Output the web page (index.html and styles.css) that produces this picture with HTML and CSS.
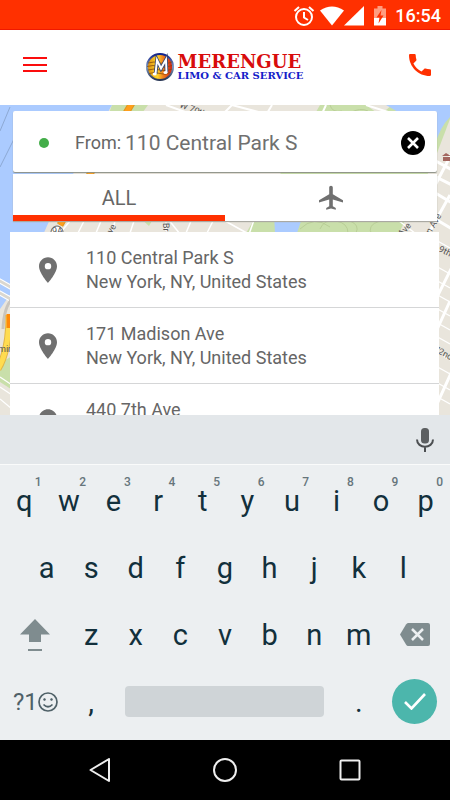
FILE: index.html
```html
<!DOCTYPE html>
<html lang="en">
<head>
<meta charset="utf-8">
<meta name="viewport" content="width=device-width, initial-scale=1">
<title>Merengue Limo &amp; Car Service</title>
<link rel="stylesheet" href="styles.css">
</head>
<body>
<div class="status">
  <svg width="22" height="22" viewBox="0 0 22 22" fill="none" stroke="#fff"><circle cx="11" cy="12" r="8" stroke-width="2"/><path d="M11 7v5.500l4 2.500" stroke-width="2"/><path d="M1.500 6l4.500-4M20.500 6L16 2" stroke-width="2"/></svg>
  <svg class="wifi" width="24" height="20" viewBox="0 0 24 20" fill="#fff"><path d="M0 4.500Q12-3.500 24 4.500L12 19.500z"/></svg>
  <svg width="20" height="20" viewBox="0 0 20 20" fill="#fff"><path d="M20 0v19.500H0z"/></svg>
  <svg class="battery" width="12" height="20" viewBox="0 0 12 20"><path d="M0 2.500h3.500V0h5v2.500H12V12H0z" fill="#ff9d80"/><path d="M0 12h12v7.500H0z" fill="#fff"/><path d="M7.500 4L2.500 11.500h3L4.500 17.500l5-8h-3z" fill="#ff3000"/></svg>
  <span>16:54</span>
</div>
<header class="header">
  <button class="icon-button" aria-label="Menu"><svg width="24" height="18" viewBox="0 0 24 18" fill="#fb0d0d"><path d="M0 1h24v2H0zM0 8h24v2H0zM0 14h24v2H0z"/></svg></button>
  <div class="brand">
    <svg width="30" height="30" viewBox="0 0 30 30">
      <defs>
        <linearGradient id="disc" x1="0" x2="1"><stop offset="0" stop-color="#d88a10"/><stop offset=".4" stop-color="#ffd52a"/><stop offset=".62" stop-color="#f0801c"/><stop offset="1" stop-color="#d01512"/></linearGradient>
        <linearGradient id="rim" x1="0" y1="0" x2="0" y2="1"><stop offset="0" stop-color="#10218c"/><stop offset=".5" stop-color="#7c96bd"/><stop offset="1" stop-color="#263453"/></linearGradient>
      </defs>
      <circle cx="15" cy="15" r="13" fill="url(#disc)" stroke="url(#rim)" stroke-width="2"/>
      <path d="M3 11q6-2 12 0t12-1M2 14.500q6-2 12 0t13-1M3 18q6-2 12 0t12-1M4 21.500q6-2 11 0t10-1" fill="none" stroke="#854b0c" stroke-width=".8"/>
      <path d="M10.500 22L12 8l4 8.500L21 7.500l.5 13" fill="none" stroke="#33436f" stroke-width="3.600"/>
      <path d="M10.500 22L12 8l4 8.500L21 7.500l.5 13" fill="none" stroke="#fff" stroke-width="2"/>
      <ellipse cx="9.700" cy="22" rx="2" ry="1.500" fill="#fff"/><ellipse cx="20.500" cy="20.500" rx="2" ry="1.500" fill="#fff"/>
    </svg>
    <div class="brand-text"><span class="brand-name">MERENGUE</span><span class="brand-sub">LIMO &amp; CAR SERVICE</span></div>
  </div>
  <button class="icon-button" aria-label="Call"><svg width="22" height="22" viewBox="3 3 18 18" fill="#ff3000"><path d="M6.620 10.790c1.440 2.830 3.760 5.140 6.590 6.590l2.200-2.200c.27-.27.67-.36 1.020-.24 1.120.37 2.330.57 3.570.57.55 0 1 .45 1 1V20c0 .55-.45 1-1 1-9.390 0-17-7.610-17-17 0-.55.45-1 1-1h3.500c.55 0 1 .45 1 1 0 1.250.2 2.450.57 3.570.11.35.03.74-.25 1.020z"/></svg></button>
</header>
<main class="map">
  <svg class="map-art" viewBox="0 0 450 310" preserveAspectRatio="xMidYMin slice" aria-hidden="true">
    <rect width="450" height="310" fill="#e9e5dc"/>
    <path d="M112 0h36l-16 22-50 60z" fill="#c9dfaa"/>
    <path d="M320 0h130v14L434 56 398 130H245z" fill="#c9dfaa"/>
    <path d="M366 0h26l-12 10z" fill="#e9e5dc"/>
    <path d="M0 0h112L60 92 42 132 14 184 0 204z" fill="#abcbff"/>
    <path d="M386 0h64v12q-10 10-15 28l-18-22z" fill="#abcbff"/>
    <path d="M274 110h29l-6 18h-22z" fill="#abcbff"/>
    <path d="M139 112h15l-5 9z" fill="#c9dfaa"/>
    <path d="M0 258l14-8v36l-14-9z" fill="#c9dfaa"/>
    <path d="M0 26L10 2M0 62L16 30" stroke="#8da9d4" fill="none"/>
    <g stroke="#b9ce96" fill="none"><path d="M320 124q4-10 16-8t12 12M300 124q14-14 30-2M350 116q10 4 6 12M380 116q-14 4-8 14M350 8q10-6 18-2M330 0q2 8 12 6"/></g>
    <g stroke="#fff" fill="none" stroke-width="2">
      <path d="M166 0l44 16M232 0l60 16M272 0l-12 20M326 0l-12 26M366 0l38 12M232 0l-12 12"/>
      <path d="M60 128l20-24M78 128l12-24M96 128l10-24M112 128l6-24M130 128l8-24M186 128l10-24M206 130l10-20M160 104l24 30M166 104v30M218 112l36 20M258 104l-10 28M394 112l26 20" stroke-width="1.500"/>
      <path d="M430 90l24-46M430 126l20-36M432 202l20-40M430 240l20-44M432 310l20-44M432 54l22 12M432 70l20 10M432 86l20 12M432 112l20 12" stroke-width="3"/>
      <path d="M434 134l16 9M434 160l16 9M434 174l16 9M434 188l16 9M434 202l16 9M434 216l16 9M434 230l16 9M434 246l16 9M434 260l16 9M434 276l16 9M434 290l16 9M0 272l12 8M0 282l12 8M0 294l12 10" stroke-width="1.200"/>
    </g>
    <path d="M-2 175l16 9M-2 187l16 9" stroke="#fff" stroke-width="5"/><path d="M-2 175l16 9M-2 187l16 9" stroke="#dad7d0" stroke-width="3"/>
    <path d="M12 194Q4 202 3 224" fill="none" stroke="#c9c5bd" stroke-width="3"/>
    <path d="M132-2L60 120" stroke="#dd961f" stroke-width="7"/><path d="M132-2L60 120" stroke="#ff9f1c" stroke-width="5"/>
    <path d="M9 210q0 36-11 54" stroke="#e1b649" stroke-width="7" fill="none"/><path d="M9 210q0 36-11 54" stroke="#ffdc50" stroke-width="5" fill="none"/>
    <path d="M9 209v14" stroke="#ff8a0a" stroke-width="5"/>
    <circle cx="57" cy="127" r="6" fill="#fff" stroke="#666"/>
    <g fill="#555" class="map-labels"><text x="52" y="129">9A</text><text transform="translate(179 2) rotate(22)">W 70th</text><text transform="translate(109 134) rotate(-60)">Ave</text><text transform="translate(163 118) rotate(88)">Broadway</text><text transform="translate(402 132) rotate(-50)">Ave</text><text transform="translate(428 134) rotate(-60)">on Ave</text><text transform="translate(438 146) rotate(26)">9th</text><text transform="translate(433 246) rotate(28)">72nd</text><text x="-2" y="247">min</text></g>
    <path d="M442 51l4-3 5 3zM443 52h8v4h-8z" fill="#a3665f"/>
  </svg>
  <div class="search">
    <form class="from">
      <span class="dot"></span>
      <label for="from">From:</label>
      <input id="from" type="text" value="110 Central Park S">
      <button class="clear" type="button" aria-label="Clear"><svg width="24" height="24" viewBox="0 0 24 24"><circle cx="12" cy="12" r="12"/><path d="M7 7l10 10M17 7L7 17" stroke="#fff" stroke-width="2.600"/></svg></button>
    </form>
    <div class="tabs">
      <button class="tab active">ALL</button>
      <button class="tab" aria-label="Airports"><svg width="24" height="25" viewBox="2 1.500 20 20.500" fill="#707070"><path d="M22 16v-2l-8.500-5V3.500c0-.83-.67-1.500-1.500-1.500s-1.500.67-1.500 1.500V9L2 14v2l8.500-2.500V19L8 20.500V22l4-1 4 1v-1.500L13.500 19v-5.500z"/></svg></button>
    </div>
  </div>
  <ul class="results">
    <li><svg class="pin" viewBox="5 2 14 20"><path fill-rule="evenodd" d="M12 2C8.130 2 5 5.130 5 9c0 5.250 7 13 7 13s7-7.750 7-13c0-3.870-3.130-7-7-7zm0 9.500a2.500 2.500 0 1 1 0-5 2.500 2.500 0 0 1 0 5z"/></svg><div>110 Central Park S<br>New York, NY, United States</div></li>
    <li><svg class="pin" viewBox="5 2 14 20"><path fill-rule="evenodd" d="M12 2C8.130 2 5 5.130 5 9c0 5.250 7 13 7 13s7-7.750 7-13c0-3.870-3.130-7-7-7zm0 9.500a2.500 2.500 0 1 1 0-5 2.500 2.500 0 0 1 0 5z"/></svg><div>171 Madison Ave<br>New York, NY, United States</div></li>
    <li><svg class="pin" viewBox="5 2 14 20"><path fill-rule="evenodd" d="M12 2C8.130 2 5 5.130 5 9c0 5.250 7 13 7 13s7-7.750 7-13c0-3.870-3.130-7-7-7zm0 9.500a2.500 2.500 0 1 1 0-5 2.500 2.500 0 0 1 0 5z"/></svg><div>440 7th Ave</div></li>
  </ul>
</main>
<section class="keyboard" aria-label="Keyboard">
  <div class="suggest"><button class="mic" aria-label="Voice input"><svg width="18" height="24" viewBox="0 0 18 24"><rect x="5" y="0" width="8" height="15.500" rx="3.500" fill="#5c5f61"/><path d="M1 11.500c0 9.500 16 9.500 16 0M9 18.500V24" fill="none" stroke="#4c4f51" stroke-width="2"/></svg></button></div>
  <div class="keys">
    <button>q<sup>1</sup></button><button>w<sup>2</sup></button><button>e<sup>3</sup></button><button>r<sup>4</sup></button><button>t<sup>5</sup></button><button>y<sup>6</sup></button><button>u<sup>7</sup></button><button>i<sup>8</sup></button><button>o<sup>9</sup></button><button>p<sup>0</sup></button>
    <button class="indent">a</button><button>s</button><button>d</button><button>f</button><button>g</button><button>h</button><button>j</button><button>k</button><button>l</button>
    <button class="wide row-start" aria-label="Shift"><svg width="30" height="32" viewBox="0 0 30 32" fill="#7f8c8f"><path d="M15 0l15 15.500H21V23H9v-7.500H0zM8 30h14v2H8z"/></svg></button><button>z</button><button>x</button><button>c</button><button>v</button><button>b</button><button>n</button><button>m</button><button class="wide" aria-label="Delete"><svg width="30" height="23" viewBox="0 0 30 23"><path d="M8 0h20q2 0 2 2v19q0 2-2 2H8q-1 0-2-1.500L0 11.500 6 1.500Q7 0 8 0z" fill="#7f8c8f"/><path d="M12 6l11 11M23 6L12 17" stroke="#eceff1" stroke-width="2.500"/></svg></button>
    <button class="wide symbols row-start">?1<svg width="20" height="20" viewBox="0 0 20 20" fill="none" stroke="#4f6168" stroke-width="1.700"><circle cx="10" cy="10" r="9"/><path d="M5.500 12.500q4.500 4.500 9 0"/><circle cx="6.500" cy="7.500" r="1" fill="#4f6168" stroke-width=".6"/><circle cx="13.500" cy="7.500" r="1" fill="#4f6168" stroke-width=".6"/></svg></button><button>,</button><button class="space" aria-label="Space"><span></span></button><button>.</button><button class="wide" aria-label="Done"><span class="done"><svg width="22" height="17" viewBox="0 0 22 17" fill="none" stroke="#fff" stroke-width="2.600"><path d="M1 9l6.500 6.500L21 1"/></svg></span></button>
  </div>
</section>
<nav class="nav">
  <button aria-label="Back"><svg width="24" height="24" viewBox="0 0 24 24" fill="none" stroke="#eee" stroke-width="2" stroke-linejoin="round"><path d="M21 1v22L2.500 12z"/></svg></button>
  <button aria-label="Home"><svg width="24" height="24" viewBox="0 0 24 24" fill="none" stroke="#eee" stroke-width="2"><circle cx="12" cy="12" r="11"/></svg></button>
  <button aria-label="Recent apps"><svg width="24" height="24" viewBox="0 0 24 24" fill="none" stroke="#eee" stroke-width="2"><rect x="2.500" y="2.500" width="19" height="19" rx="1"/></svg></button>
</nav>
</body>
</html>
```
FILE: styles.css
```css
* { box-sizing: border-box; }
body {
  margin: 0;
  height: 100vh;
  display: flex;
  flex-direction: column;
  font-family: Roboto, sans-serif;
  color: #666;
  background: #fff;
}
button {
  padding: 0;
  border: 0;
  background: none;
  color: inherit;
  font: inherit;
}
svg { display: block; flex: none; }

.status {
  height: 30px;
  flex: none;
  display: flex;
  align-items: center;
  justify-content: flex-end;
  padding: 2px 9px 0 0;
  background: #ff3000;
  border-bottom: 1px solid #f01800;
  color: #fff;
  font-size: 18px;
  font-weight: 500;
}
.wifi { margin-left: 5px; }
.battery { margin: 0 9px 0 10px; }

.header {
  height: 75px;
  flex: none;
  display: flex;
  align-items: center;
  justify-content: space-between;
  padding: 0 19px 5px 23px;
  background: #fff;
}
.brand { display: flex; align-items: center; gap: 3px; padding: 4px 8px 0 0; }
.brand-text {
  display: flex;
  flex-direction: column;
  font-family: "DejaVu Serif", serif;
  font-weight: bold;
}
.brand-name { font-size: 18px; line-height: 17px; color: #d80c0c; }
.brand-sub { font-size: 10px; line-height: 12px; color: #1420c8; }

.map {
  position: relative;
  flex: 1;
  min-height: 0;
  overflow: hidden;
  padding: 6px 11px 0 10px;
}
.map-art { position: absolute; inset: 0; width: 100%; height: 100%; }
.map-labels { font-size: 9px; }
.search { position: relative; margin: 0 2px 11px 3px; }
.from {
  height: 61px;
  display: flex;
  align-items: center;
  padding: 2px 12px 0 26px;
  background: #fff;
  border-radius: 2px;
  box-shadow: 0 1px 1px #8b8f86;
  margin-bottom: 2px;
  font-size: 18px;
}
.dot { width: 10px; height: 10px; border-radius: 50%; background: #43ad49; margin-right: 26px; }
.from input {
  flex: 1;
  min-width: 0;
  padding: 0;
  margin-left: 4px;
  border: 0;
  outline: 0;
  background: none;
  color: #707070;
  font: 21px Roboto, sans-serif;
}
.tabs {
  display: grid;
  grid-template-columns: 1fr 1fr;
  height: 47px;
  background: #fff;
  box-shadow: 0 1px 1px #aaa9a2;
}
.tab {
  display: flex;
  align-items: center;
  justify-content: center;
  font-size: 20px;
  border-bottom: 0 solid #ff3000;
}
.active { border-bottom-width: 6px; padding-top: 6px; }

.results {
  position: relative;
  margin: 0;
  padding: 0;
  list-style: none;
  background: #fff;
  font-size: 18px;
  line-height: 24px;
}
.results li {
  min-height: 76px;
  display: flex;
  padding: 14px 0 13px 29px;
  gap: 29px;
  border-bottom: 1px solid #d5d6d7;
}
.pin { width: 18px; height: 26px; margin-top: 11px; fill: #707070; }

.keyboard { flex: none; background: #eceff1; }
.suggest {
  height: 50px;
  display: flex;
  align-items: center;
  justify-content: flex-end;
  padding-right: 16px;
  background: #e3e7ea;
  border-bottom: 1px solid #fafbfb;
}
.keys {
  display: grid;
  grid-template-columns: repeat(20, 1fr);
  grid-auto-rows: 67px;
  padding: 2px 2px 5px;
  color: #12303c;
  font-size: 29px;
}
.keys button {
  position: relative;
  grid-column-end: span 2;
  display: flex;
  align-items: center;
  justify-content: center;
  min-width: 0;
}
.keys sup {
  position: absolute;
  top: 8px;
  right: 5px;
  color: #66757b;
  font-size: 12px;
  line-height: 14px;
  font-weight: 500;
}
.keys .indent { grid-column-start: 2; }
.keys .wide { grid-column-end: span 3; }
.keys .row-start { grid-column-start: 1; }
.keys .symbols { font-size: 24px; color: #4f6168; }
.keys .space { grid-column-end: span 10; padding: 0 12px; }
.space span { width: 100%; height: 31px; border-radius: 4px; background: #cfd4d7; }
.done {
  width: 45px;
  height: 45px;
  display: grid;
  place-items: center;
  border-radius: 50%;
  background: #4cb6ac;
}

.nav {
  height: 60px;
  flex: none;
  display: flex;
  align-items: center;
  justify-content: center;
  gap: 101px;
  background: #000;
}
```
